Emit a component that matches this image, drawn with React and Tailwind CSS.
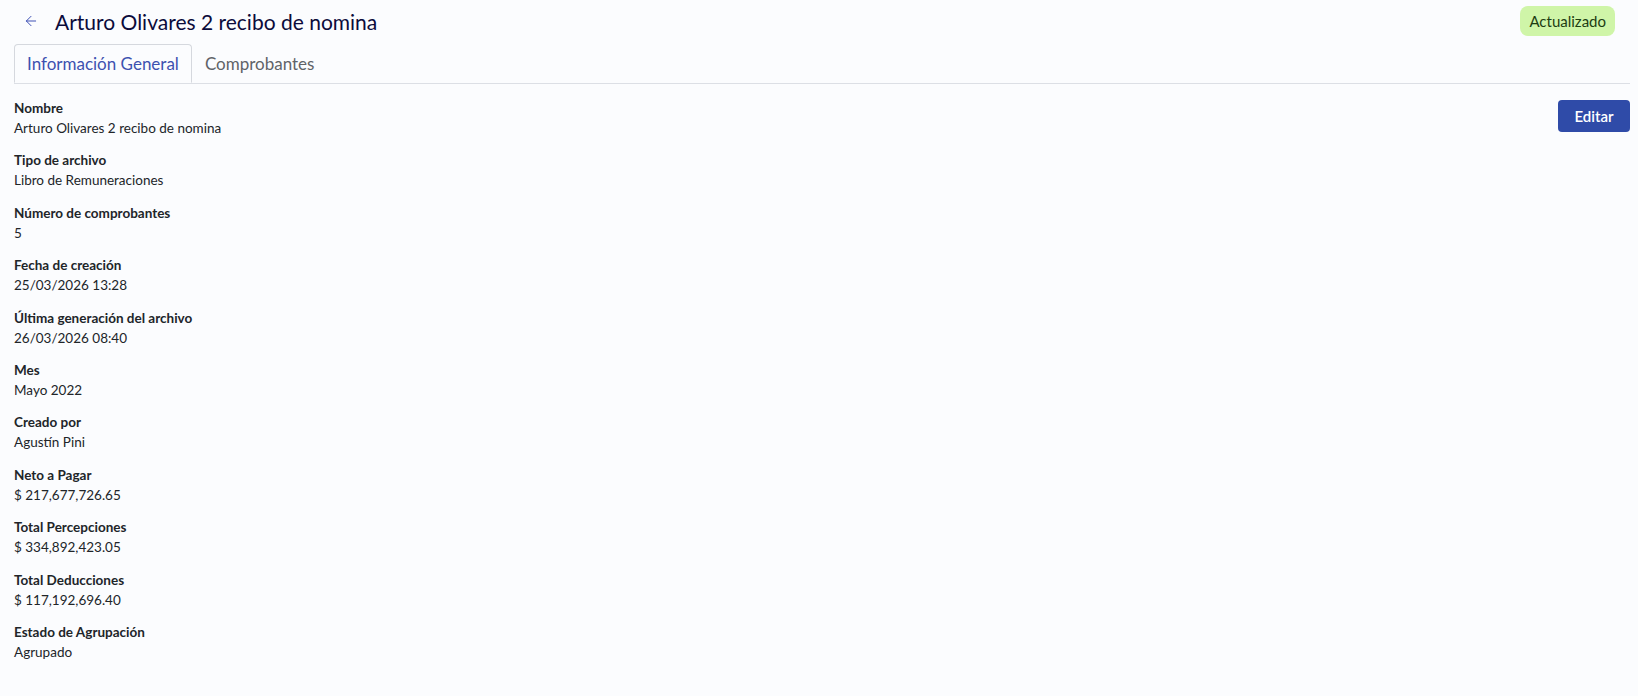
import { ArrowLeft } from "lucide-react";

const fields = [
    { label: "Nombre", value: "Arturo Olivares 2 recibo de nomina" },
    { label: "Tipo de archivo", value: "Libro de Remuneraciones" },
    { label: "Número de comprobantes", value: "5" },
    { label: "Fecha de creación", value: "25/03/2026 13:28" },
    { label: "Última generación del archivo", value: "26/03/2026 08:40" },
    { label: "Mes", value: "Mayo 2022" },
    { label: "Creado por", value: "Agustín Pini" },
    { label: "Neto a Pagar", value: "$ 217,677,726.65" },
    { label: "Total Percepciones", value: "$ 334,892,423.05" },
    { label: "Total Deducciones", value: "$ 117,192,696.40" },
    { label: "Estado de Agrupación", value: "Agrupado" },
];

const App = () => {
    return (
        <div className="min-h-screen bg-[#fbfcfe] font-['Lato','Noto_Sans',sans-serif] pl-[14px] pr-[8px]">
            {/* Header */}
            <div className="flex items-center justify-between h-[42px]">
                <div className="flex items-center">
                    <button className="ml-[9px] w-[16px] h-[16px] flex items-center justify-center text-[#3f51b5]">
                        <ArrowLeft className="w-[16px] h-[16px]" strokeWidth={1.5} />
                    </button>
                    <h1 className="ml-[16px] text-[21px] text-[#0b0b3b] leading-none">
                        Arturo Olivares 2 recibo de nomina
                    </h1>
                </div>
                <span className="mr-[15px] px-[9px] h-[30px] flex items-center rounded-[8px] bg-[#cff5a8] text-[#1d3d12] text-[15px]">
                    Actualizado
                </span>
            </div>

            {/* Tabs */}
            <div className="flex border-b border-[#dcdfe5] mt-[2px]">
                <button className="-mb-px h-[39px] px-[12px] border border-[#d5d8de] border-b-[#fbfcfe] rounded-t-[4px] text-[17px] text-[#3d51b0] bg-[#fbfcfe]">
                    Información General
                </button>
                <button className="h-[39px] px-[13px] text-[17px] text-[#5f6368]">
                    Comprobantes
                </button>
            </div>

            {/* Content */}
            <div className="flex justify-between pt-[14px]">
                <div className="flex flex-col gap-[12.4px]">
                    {fields.map((f) => (
                        <div key={f.label} className="flex flex-col">
                            <span className="text-[13.5px] leading-[20px] font-bold text-[#212529]">{f.label}</span>
                            <span className="text-[13.5px] leading-[20px] text-[#212529]">{f.value}</span>
                        </div>
                    ))}
                </div>
                <div className="pt-[2px]">
                    <button className="h-[32px] w-[72px] rounded-[4px] bg-[#2f4ba8] text-white text-[15px] font-semibold">
                        Editar
                    </button>
                </div>
            </div>
        </div>
    );
};

export default App;
